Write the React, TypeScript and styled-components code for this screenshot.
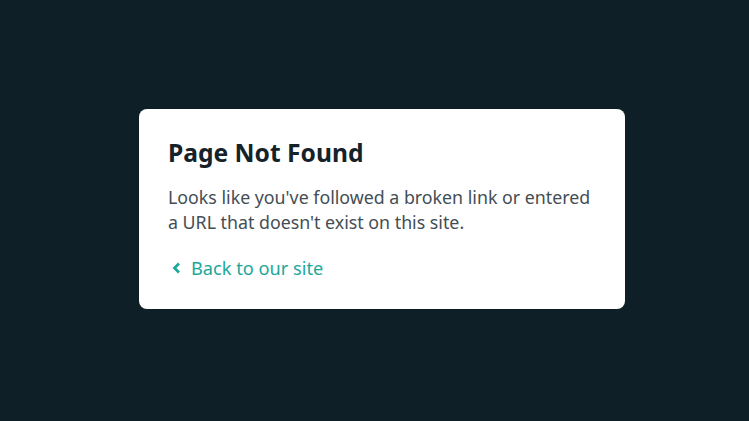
import React from "react";
import styled, { createGlobalStyle } from "styled-components";

const Global = createGlobalStyle`
  html, body { margin: 0; padding: 0; background: #0f1f27; }
  body { font-family: "Noto Sans", "Open Sans", sans-serif; }
`;

const Page = styled.div`
  width: 749px;
  height: 421px;
  display: flex;
  align-items: center;
  justify-content: center;
  padding-left: 15px;
  padding-bottom: 3px;
  box-sizing: border-box;
`;

const Card = styled.div`
  width: 486px;
  height: 200px;
  box-sizing: border-box;
  background: #ffffff;
  border-radius: 8px;
  padding: 29px 29px;
  display: flex;
  flex-direction: column;
`;

const Title = styled.h1`
  margin: 0;
  font-size: 24.6px;
  font-weight: 700;
  color: #152229;
  line-height: 30px;
`;

const Text = styled.p`
  margin: 17px 0 0;
  font-size: 17.8px;
  line-height: 25px;
  color: #434e54;
  white-space: nowrap;
`;

const BackLink = styled.a`
  margin-top: 22px;
  padding-left: 4px;
  display: flex;
  align-items: center;
  gap: 10px;
  font-size: 18.2px;
  line-height: 22px;
  color: #20a79b;
  text-decoration: none;
`;

export default function App() {
  return (
    <>
      <Global />
      <Page>
        <Card>
          <Title>Page Not Found</Title>
          <Text>
            Looks like you've followed a broken link or entered
            <br />a URL that doesn't exist on this site.
          </Text>
          <BackLink href="#">
            <svg width="9" height="12" viewBox="0 0 9 12">
              <path d="M7 1.5 L2.5 6 L7 10.5" fill="none" stroke="#20a79b" strokeWidth="2.8" />
            </svg>
            Back to our site
          </BackLink>
        </Card>
      </Page>
    </>
  );
}
